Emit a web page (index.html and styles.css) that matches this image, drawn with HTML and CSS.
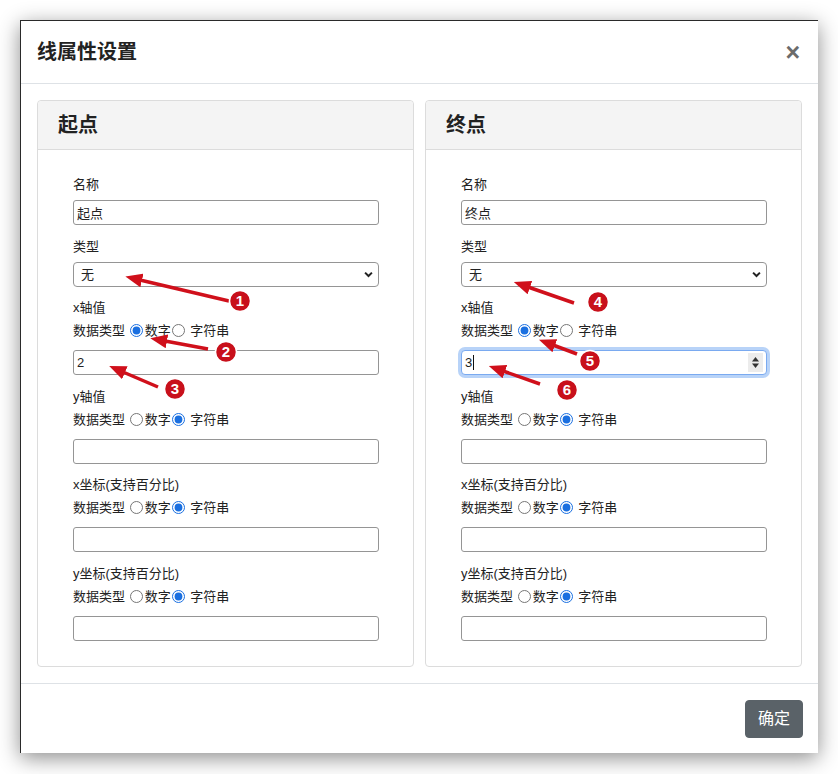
FILE: index.html
```html
<!DOCTYPE html>
<html lang="zh-CN">
<head>
    <meta charset="UTF-8">
    <meta name="viewport" content="width=device-width, initial-scale=1.0">
    <title>线属性设置</title>
    <link rel="stylesheet" href="styles.css">
</head>
<body>

<div class="page">
    <div class="modal">
        <div class="modal-header">
            <h5 class="modal-title">线属性设置</h5>
            <button class="close" type="button">×</button>
        </div>

        <div class="modal-body">
            <div class="cards">
                <!-- 起点 -->
                <div class="card">
                    <div class="card-header">起点</div>
                    <div class="card-body">
                        <div class="field">
                            <label class="lbl">名称</label>
                            <input class="input" type="text" value="起点">
                        </div>
                        <div class="field">
                            <label class="lbl">类型</label>
                            <select class="input select"><option>无</option></select>
                        </div>
                        <div class="field typed">
                            <label class="lbl">x轴值</label>
                            <div class="dtype">数据类型 <input type="radio" name="s-x" checked>数字<input type="radio" name="s-x"> 字符串</div>
                            <input class="input" type="text" value="2">
                        </div>
                        <div class="field typed">
                            <label class="lbl">y轴值</label>
                            <div class="dtype">数据类型 <input type="radio" name="s-y">数字<input type="radio" name="s-y" checked> 字符串</div>
                            <input class="input" type="text">
                        </div>
                        <div class="field typed">
                            <label class="lbl">x坐标(支持百分比)</label>
                            <div class="dtype">数据类型 <input type="radio" name="s-cx">数字<input type="radio" name="s-cx" checked> 字符串</div>
                            <input class="input" type="text">
                        </div>
                        <div class="field typed">
                            <label class="lbl">y坐标(支持百分比)</label>
                            <div class="dtype">数据类型 <input type="radio" name="s-cy">数字<input type="radio" name="s-cy" checked> 字符串</div>
                            <input class="input" type="text">
                        </div>
                    </div>
                </div>

                <!-- 终点 -->
                <div class="card">
                    <div class="card-header">终点</div>
                    <div class="card-body">
                        <div class="field">
                            <label class="lbl">名称</label>
                            <input class="input" type="text" value="终点">
                        </div>
                        <div class="field">
                            <label class="lbl">类型</label>
                            <select class="input select"><option>无</option></select>
                        </div>
                        <div class="field typed">
                            <label class="lbl">x轴值</label>
                            <div class="dtype">数据类型 <input type="radio" name="e-x" checked>数字<input type="radio" name="e-x"> 字符串</div>
                            <div class="num-wrap">
                                <input class="input focused" type="number" value="3">
                                <span class="caret"></span>
                                <span class="spin">
                                    <svg width="15" height="19" viewBox="0 0 15 19">
                                        <path d="M7.5 4 L11 8.5 L4 8.5 Z" fill="#333"/>
                                        <path d="M7.5 15 L11 10.5 L4 10.5 Z" fill="#333"/>
                                    </svg>
                                </span>
                            </div>
                        </div>
                        <div class="field typed">
                            <label class="lbl">y轴值</label>
                            <div class="dtype">数据类型 <input type="radio" name="e-y">数字<input type="radio" name="e-y" checked> 字符串</div>
                            <input class="input" type="text">
                        </div>
                        <div class="field typed">
                            <label class="lbl">x坐标(支持百分比)</label>
                            <div class="dtype">数据类型 <input type="radio" name="e-cx">数字<input type="radio" name="e-cx" checked> 字符串</div>
                            <input class="input" type="text">
                        </div>
                        <div class="field typed">
                            <label class="lbl">y坐标(支持百分比)</label>
                            <div class="dtype">数据类型 <input type="radio" name="e-cy">数字<input type="radio" name="e-cy" checked> 字符串</div>
                            <input class="input" type="text">
                        </div>
                    </div>
                </div>
            </div>
        </div>

        <div class="modal-footer">
            <button class="btn" type="button">确定</button>
        </div>
    </div>
</div>

<!-- annotation arrows -->
<svg class="marks" width="838" height="774" viewBox="0 0 838 774">
    <defs>
        <marker id="head" markerUnits="userSpaceOnUse" markerWidth="17" markerHeight="14" refX="2" refY="7" orient="auto">
            <path d="M0 0 L17 7 L0 14 Z" fill="#d0101b"/>
        </marker>
    </defs>
    <g stroke="#d0101b" stroke-width="3.5" marker-end="url(#head)">
        <line x1="229" y1="301" x2="140" y2="280"/>
        <line x1="208" y1="349" x2="165" y2="341"/>
        <line x1="158" y1="387" x2="123" y2="372"/>
        <line x1="574" y1="303" x2="528" y2="287"/>
        <line x1="577" y1="354" x2="553" y2="345"/>
        <line x1="540" y1="384" x2="503" y2="371"/>
    </g>
    <g class="badge">
        <circle cx="240" cy="301" r="10.5"/><text x="240" y="306">1</text>
        <circle cx="226" cy="352" r="10.5"/><text x="226" y="357">2</text>
        <circle cx="175" cy="389" r="10.5"/><text x="175" y="394">3</text>
        <circle cx="598" cy="302" r="10.5"/><text x="598" y="307">4</text>
        <circle cx="590" cy="361" r="10.5"/><text x="590" y="366">5</text>
        <circle cx="567" cy="390" r="10.5"/><text x="567" y="395">6</text>
    </g>
</svg>

</body>
</html>
```

FILE: styles.css
```css
body {
    margin: 0;
    background: #ffffff;
    font-family: "Liberation Sans", "Noto Sans CJK SC", sans-serif;
    color: #212529;
    position: relative;
}

.page {
    padding: 20px 20px 21px 20px;
}

.modal {
    width: 798px;
    box-sizing: border-box;
    background: #ffffff;
    border-top: 1px solid #2a2a2a;
    border-left: 1px solid #2a2a2a;
    box-shadow: 0 5px 20px rgba(0, 0, 0, 0.45);
}

.modal-header {
    display: flex;
    align-items: center;
    padding: 16px;
    border-bottom: 1px solid #dee2e6;
}

.modal-title {
    margin: 0;
    font-size: 20px;
    font-weight: 700;
    line-height: 30px;
    color: #222;
}

.close {
    margin-left: auto;
    margin-right: 2px;
    padding: 0;
    border: none;
    background: none;
    font-family: "Liberation Sans", sans-serif;
    font-size: 25px;
    font-weight: 700;
    line-height: 30px;
    color: #6b6b6b;
}

.modal-body {
    padding: 16px;
}

.cards {
    display: grid;
    grid-template-columns: 1fr 1fr;
    gap: 11px;
}

.card {
    border: 1px solid #dcdcdc;
    border-radius: 4px;
}

.card-header {
    padding: 12px 20px;
    font-size: 20px;
    font-weight: 700;
    line-height: 24px;
    background: #f4f4f4;
    border-bottom: 1px solid #dcdcdc;
    border-radius: 4px 4px 0 0;
    color: #222;
}

.card-body {
    padding: 25px 34px 14px 35px;
    font-size: 13px;
    color: #222;
}

.field {
    margin-bottom: 11.5px;
}

.lbl {
    display: block;
    line-height: 20px;
    margin-bottom: 5px;
}

.typed .lbl {
    margin-bottom: 3px;
}

.dtype {
    line-height: 20px;
    margin-bottom: 9px;
    white-space: nowrap;
}

.dtype input {
    width: 13px;
    height: 13px;
    margin: 0 2px 0 1px;
    vertical-align: -2px;
    accent-color: #1a6fe0;
}

.input {
    display: block;
    width: 100%;
    height: 25px;
    box-sizing: border-box;
    padding: 0 3px;
    border: 1px solid #959595;
    border-radius: 3px;
    background: #ffffff;
    font-family: "Liberation Sans", "Noto Sans CJK SC", sans-serif;
    font-size: 13px;
    color: #222;
    outline: none;
}

.select {
    appearance: none;
    -webkit-appearance: none;
    padding-left: 7px;
    border-radius: 4px;
    background: #ffffff url("data:image/svg+xml,%3Csvg xmlns='http://www.w3.org/2000/svg' viewBox='0 0 10 7'%3E%3Cpath d='M1.2 1.4 L5 5.2 L8.8 1.4' fill='none' stroke='%23222' stroke-width='2.2'/%3E%3C/svg%3E") no-repeat right 5px center / 9px 7px;
}

.num-wrap {
    position: relative;
}

.focused {
    border-color: #7aaaf0;
    border-radius: 4px;
    box-shadow: 0 0 0 3px #b8d3f8;
    -moz-appearance: textfield;
}

.focused::-webkit-inner-spin-button,
.focused::-webkit-outer-spin-button {
    -webkit-appearance: none;
    margin: 0;
}

.caret {
    position: absolute;
    left: 12px;
    top: 5px;
    width: 1px;
    height: 15px;
    background: #111;
}

.spin {
    position: absolute;
    right: 4px;
    top: 3px;
    width: 15px;
    height: 19px;
    background: #ececec;
}

.spin svg {
    display: block;
}

.modal-footer {
    display: flex;
    justify-content: flex-end;
    padding: 16px 15px 15px 16px;
    border-top: 1px solid #dee2e6;
}

.btn {
    height: 38px;
    padding: 0 12px;
    border: 1px solid #5a6268;
    border-radius: 4px;
    background: #5a6268;
    color: #ffffff;
    font-family: "Liberation Sans", "Noto Sans CJK SC", sans-serif;
    font-size: 16px;
    line-height: 24px;
}

.marks {
    position: absolute;
    left: 0;
    top: 0;
    pointer-events: none;
}

.badge circle {
    fill: #c8101b;
    stroke: #ffffff;
    stroke-width: 1.5;
}

.badge text {
    fill: #ffffff;
    font-family: "Liberation Sans", sans-serif;
    font-size: 15px;
    font-weight: 700;
    text-anchor: middle;
}
```
